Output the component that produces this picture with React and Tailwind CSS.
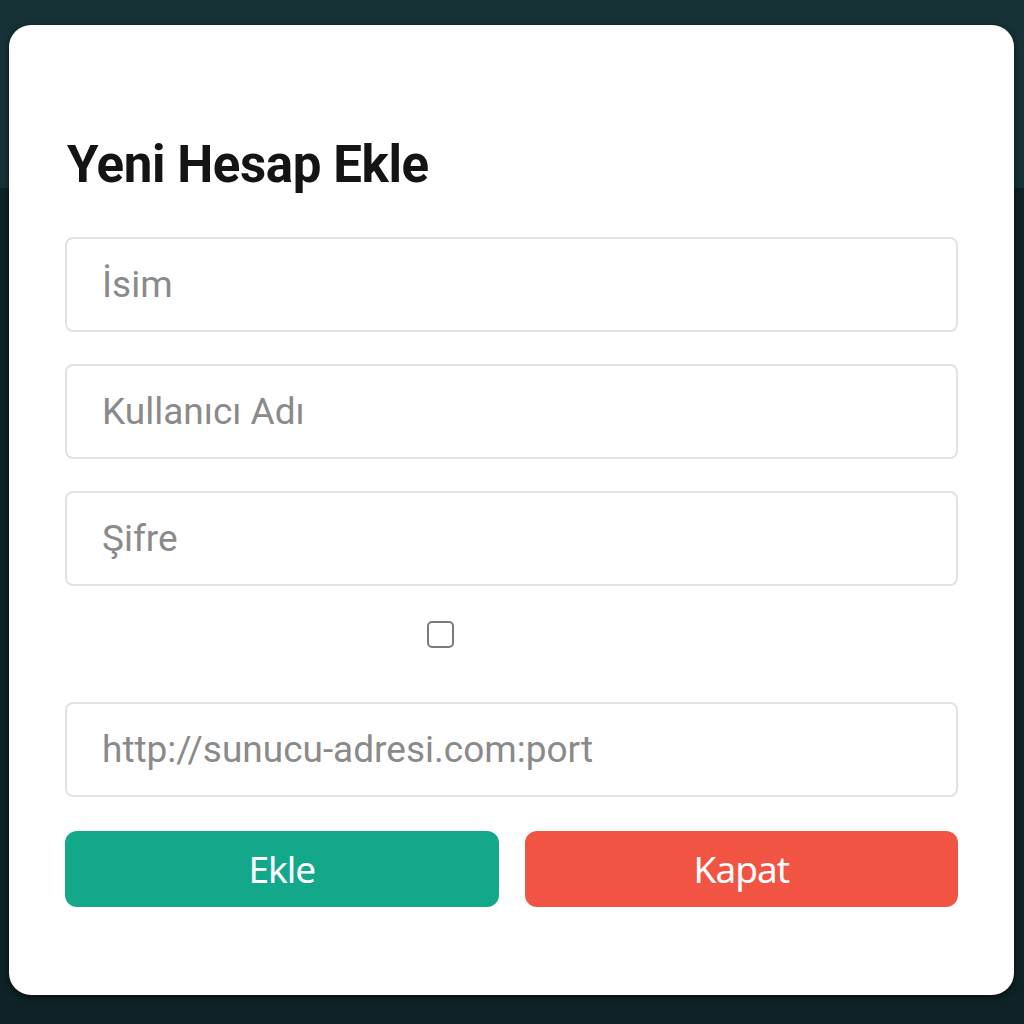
import React from 'react';

const fields = [
  { placeholder: 'İsim', type: 'text' },
  { placeholder: 'Kullanıcı Adı', type: 'text' },
  { placeholder: 'Şifre', type: 'password' },
];

const Field = ({ placeholder, type = 'text' }) => (
  <input
    type={type}
    placeholder={placeholder}
    className="w-full h-[95px] rounded-lg border-2 border-[#e2e2e2] bg-white px-[35px] text-[37px] text-gray-700 outline-none placeholder:text-[#8a8a8a] font-['Roboto',sans-serif]"
  />
);

const App = () => {
  return (
    <div className="relative w-[1024px] h-[1024px] overflow-hidden bg-[#0f2225]">
      <div className="h-[188px] bg-[#163236]"></div>

      {/* modal */}
      <div className="absolute left-[9px] top-[25px] w-[1005px] h-[970px] rounded-[22px] bg-white shadow-[0_2px_6px_rgba(0,0,0,0.6)] px-[56px] pt-[114px]">
        <h2 className="text-[51px] leading-none font-bold text-[#141414] font-['Roboto',sans-serif] tracking-[-0.4px] ml-[2px]">
          Yeni Hesap Ekle
        </h2>

        <div className="mt-[47px] flex flex-col gap-[32px]">
          {fields.map((f) => (
            <Field key={f.placeholder} placeholder={f.placeholder} type={f.type} />
          ))}
        </div>

        <div className="pt-[35px] pb-[54px] pl-[362px]">
          <input
            type="checkbox"
            className="block appearance-none w-[27px] h-[27px] rounded-[5px] border-2 border-[#7a7a7a] bg-white"
          />
        </div>

        <Field placeholder="http://sunucu-adresi.com:port" />

        <div className="mt-[34px] grid grid-cols-2 gap-[26px]">
          <button className="h-[76px] rounded-xl bg-[#13a88a] text-white text-[37px] font-['Noto_Sans',sans-serif] tracking-[-1px]">
            Ekle
          </button>
          <button className="h-[76px] rounded-xl bg-[#f25443] text-white text-[37px] font-['Noto_Sans',sans-serif] tracking-[-1px]">
            Kapat
          </button>
        </div>
      </div>
    </div>
  );
};

export default App;
